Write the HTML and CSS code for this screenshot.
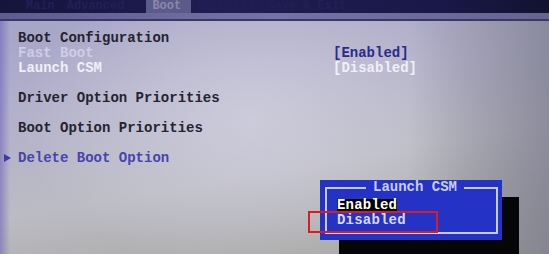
FILE: index.html
```html
<!DOCTYPE html>
<html lang="en">
<head>
<meta charset="UTF-8" />
<title>Boot Setup</title>
<link rel="stylesheet" href="styles.css">
</head>
<body>
  <div class="screen">
    <div class="menu-bar">
      <span class="tab faint">Main</span>
      <span class="tab faint">Advanced</span>
      <span class="tab active">Boot</span>
      <span class="tab faint">Security</span>
      <span class="tab faint">Save &amp; Exit</span>
    </div>
    <div class="menu-rule"></div>

    <div class="page">
      <div class="row"><span></span><span class="dark">Boot Configuration</span><span></span></div>
      <div class="row"><span></span><span class="pale">Fast Boot</span><span class="val-blue">[Enabled]</span></div>
      <div class="row"><span></span><span class="white">Launch CSM</span><span class="white">[Disabled]</span></div>
      <div class="row"></div>
      <div class="row"><span></span><span class="dark">Driver Option Priorities</span><span></span></div>
      <div class="row"></div>
      <div class="row"><span></span><span class="dark">Boot Option Priorities</span><span></span></div>
      <div class="row"></div>
      <div class="row"><span class="arrow"></span><span class="link">Delete Boot Option</span><span></span></div>
    </div>

    <!-- popup for Launch CSM -->
    <div class="popup-shadow"></div>
    <div class="popup">
      <div class="popup-frame"></div>
      <div class="popup-title">Launch CSM</div>
      <div class="popup-options">
        <span class="opt selected">Enabled</span>
        <span class="opt">Disabled</span>
      </div>
    </div>
    <div class="mark"></div>
  </div>
</body>
</html>
```

FILE: styles.css
```css
body {
  margin: 0;
  background: #9a9aa4;
}

.screen {
  position: relative;
  width: 549px;
  height: 254px;
  overflow: hidden;
  display: flex;
  flex-direction: column;
  font-family: "Liberation Mono", "DejaVu Sans Mono", monospace;
  font-size: 14px;
  font-weight: bold;
}

.menu-bar {
  height: 13px;
  display: flex;
  background: linear-gradient(to right, #15143a 0%, #1f1d52 40%, #1a1848 80%, #121230 100%);
  font-size: 12px;
  line-height: 13px;
}

.tab {
  padding: 0 6px;
}
.tab.faint:first-child { margin-left: 20px; }
.tab.active {
  margin-left: 16px;
  width: 33px;
  background: #5c5a8a;
  color: #8a88aa;
}
.tab.faint { color: #221f58; }

.menu-rule {
  height: 6px;
  background: linear-gradient(to right, #5e5c8e, #7472a6 50%, #66648e);
  border-bottom: 2px solid #3a3862;
}

.page {
  flex: 1;
  padding-top: 10px;
  background:
    linear-gradient(to right, rgba(110,100,190,0.6) 0, rgba(110,100,190,0) 10px),
    linear-gradient(to left, rgba(120,120,140,0.7) 0, rgba(120,120,140,0) 140px),
    radial-gradient(ellipse 230px 150px at 250px 100px, rgba(208,207,222,0.85), rgba(208,207,222,0)),
    linear-gradient(170deg, #a6a4c8 0%, #b3b1ca 30%, #bbbbc3 60%, #a3a39c 100%);
}

.row {
  height: 15px;
  line-height: 15px;
  display: grid;
  grid-template-columns: 18px 315px auto;
  white-space: pre;
}

.dark { color: #24232e; }
.pale { color: #cfcde6; }
.white { color: #f0eff8; }
.val-blue { color: #2b2a8c; }
.link { color: #4644ae; }

.arrow {
  width: 0;
  height: 0;
  margin: 3px 0 0 4px;
  border-top: 4px solid transparent;
  border-bottom: 4px solid transparent;
  border-left: 7px solid #3c3aa8;
}

.popup-shadow {
  position: absolute;
  left: 339px;
  top: 197px;
  width: 180px;
  height: 60px;
  background: #060608;
}

.popup {
  position: absolute;
  left: 320px;
  top: 180px;
  width: 182px;
  height: 60px;
  background: #2532c6;
}

.popup-frame {
  position: absolute;
  left: 5px;
  top: 7px;
  right: 4px;
  bottom: 6px;
  border: 2px solid #c6ccf0;
}

.popup-title {
  position: absolute;
  top: 0;
  left: 46px;
  padding: 0 7px;
  line-height: 15px;
  background: #2532c6;
  color: #c9cff6;
}

.popup-options {
  position: absolute;
  left: 17px;
  top: 19px;
  display: flex;
  flex-direction: column;
  align-items: flex-start;
  gap: 3px;
  letter-spacing: 0.2px;
}

.opt {
  line-height: 12px;
  color: #d6dcff;
}
.opt.selected {
  background: #000;
  color: #fff;
}

.mark {
  position: absolute;
  left: 308px;
  top: 211px;
  width: 126px;
  height: 18px;
  border: 2px solid #e01820;
}
```
